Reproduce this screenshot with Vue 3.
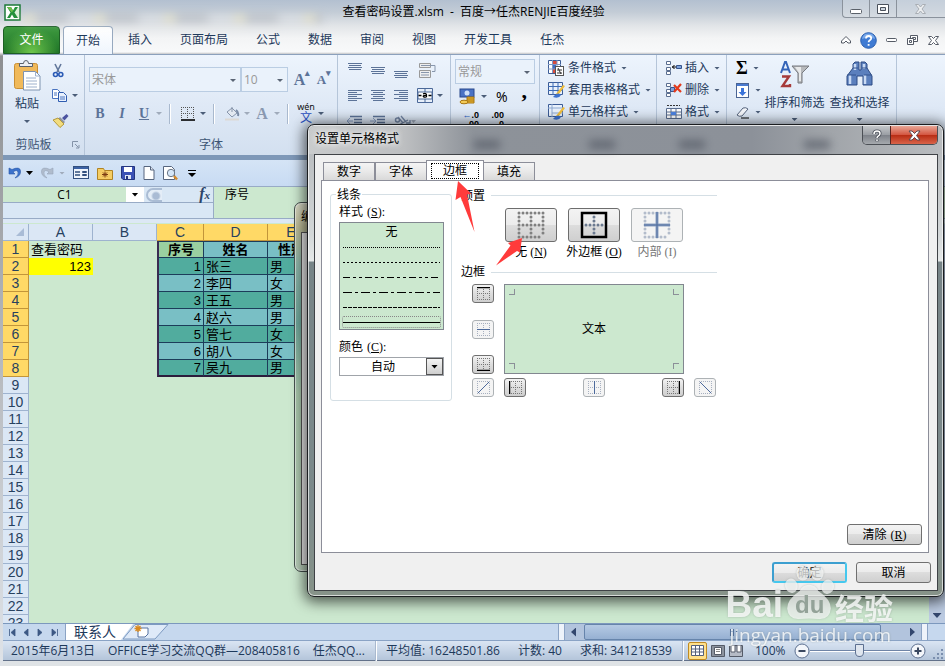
<script setup>
import { ref } from 'vue'

const tabs = ['插入', '页面布局', '公式', '数据', '审阅', '视图', '开发工具', '任杰']
const rows = [
  ['1', '张三', '男'],
  ['2', '李四', '女'],
  ['3', '王五', '男'],
  ['4', '赵六', '男'],
  ['5', '管七', '女'],
  ['6', '胡八', '女'],
  ['7', '吴九', '男'],
]
const emptyRows = Array.from({ length: 15 }, (_, i) => i + 9)
const aligns = [
  [0, 0], [0, 4], [0, 8],
]
const dashes = ['1 1', '2 2', '7 3 3 3 3 3', '9 3 3 3', '4 1', '']
const fontName = ref('宋体')
const fontSize = ref('10')
const numberFormat = ref('常规')
const lineColor = ref('自动')
const lineStyle = ref(5)
const zoom = ref(50)
const dialogTabs = ['数字', '字体', '边框', '填充']
const activeTab = ref(2)
</script>

<template>
  <div class="window">
    <header class="titlebar">
      <svg class="app-icon" width="17" height="17" viewBox="0 0 17 17">
        <rect x="1" y="1" width="15" height="15" fill="#fff" stroke="#1d7a3a" stroke-width="1.5" />
        <rect x="11" y="3" width="4" height="11" fill="#dcefd9" />
        <path d="M3 3h4l2 3.500 2-3.500h3l-3.500 5.500L14 14h-4l-2-3.500L6 14H3l3.500-5.500z" fill="#23903a" />
        <path d="M3 3h4l2 3.500-1 2z" fill="#6fbf4a" />
      </svg>
      <span class="smudge"></span>
      <h1>查看密码设置.xlsm&nbsp; -&nbsp; 百度→任杰RENJIE百度经验</h1>
      <div class="win-buttons">
        <button aria-label="最小化"><svg width="14" height="12"><rect x="1.500" y="6.500" width="11" height="4" rx="1" fill="#fff" stroke="#5a616a" /></svg></button>
        <button aria-label="还原"><svg width="14" height="12"><path d="M1.500 1.500h11v9h-11z M4.500 4.500h5v3h-5z" fill="#fff" fill-rule="evenodd" stroke="#4a515c" /></svg></button>
        <button class="wide" aria-label="关闭"><svg width="14" height="12"><path d="M1.500 1.500h3l2 2.500 2-2.500h3l-3.500 4.500 3.500 4.500h-3l-2-2.500-2 2.500h-3L5 6z" fill="#eceef0" stroke="#a9aeb4" /></svg></button>
      </div>
    </header>

    <nav class="tabs">
      <button class="file-tab">文件</button>
      <button class="tab current">开始</button>
      <button v-for="t in tabs" :key="t" class="tab">{{ t }}</button>
      <div class="tab-tools">
        <button aria-label="折叠功能区"><svg width="12" height="10"><path d="M1.500 6L6 1.500 10.500 6v2H8L6 6 4 8H1.500z" fill="#fff" stroke="#555b66" /></svg></button>
        <button aria-label="帮助"><svg width="17" height="17"><circle cx="8.500" cy="8.500" r="7.800" fill="#3f7bd3" stroke="#2b5faf" /><path d="M2 7a6.600 6.600 0 0 1 13 0q-6-3-13 0z" fill="#78a8ea" /><path d="M6 6.500q0-2.500 2.600-2.500t2.600 2.300q0 1.200-1.400 2-1.200.7-1.200 2M8.600 12v1.800" fill="none" stroke="#fff" stroke-width="1.800" /></svg></button>
        <button aria-label="最小化工作簿"><svg width="13" height="8"><rect x="1.500" y="2.500" width="10" height="3" rx="1" fill="#fff" stroke="#555b66" /></svg></button>
        <button aria-label="还原工作簿"><svg width="13" height="12"><path d="M4.500 1.500h7v6h-7z" fill="#fff" stroke="#555b66" /><path d="M6.500 3.500h3v2h-3z" fill="none" stroke="#555b66" /><path d="M1.500 4.500h6v6h-6z" fill="#fff" stroke="#555b66" /><path d="M3.500 6.500h2v2h-2z" fill="none" stroke="#555b66" /></svg></button>
        <button aria-label="关闭工作簿"><svg width="13" height="11"><path d="M1.500 1.500h3l2 2 2-2h3L8.500 5.500l3 4h-3l-2-2-2 2h-3l3-4z" fill="#fff" stroke="#555b66" /></svg></button>
      </div>
    </nav>

    <section class="ribbon">
      <div class="group clipboard">
        <div class="clip-body">
          <button class="paste">
            <svg width="28" height="31" viewBox="0 0 28 31">
              <rect x="1.500" y="3.500" width="23" height="25" rx="2" fill="#f0b95a" stroke="#c98f35" />
              <path d="M6.500 6.500V3.500h4q0-3 2.500-3t2.500 3h4v3z" fill="#eceff2" stroke="#59616c" />
              <path d="M10.500 11.500h12l4.500 4.500v14h-16.500z" fill="#fff" stroke="#7f93b0" />
              <path d="M22.500 11.500v4.500H27M13 18h10M13 21h11M13 24h11M13 27h11" stroke="#9db0cc" fill="none" />
            </svg>
            <span>粘贴</span>
            <i class="caret"></i>
          </button>
          <div class="clip-side">
            <button aria-label="剪切"><svg width="12" height="15"><path d="M3 1l4 8M9 1L5 9" stroke="#62779b" stroke-width="1.600" /><circle cx="3.500" cy="11.500" r="2" fill="none" stroke="#2a5ab5" stroke-width="1.600" /><circle cx="8.800" cy="11.500" r="2" fill="none" stroke="#2a5ab5" stroke-width="1.600" /></svg></button>
            <button aria-label="复制"><svg width="16" height="13"><path d="M.5.500h5l3 3v6h-8z" fill="#fff" stroke="#4a74c0" /><path d="M6.500 3.500h5l3 3v6h-8z" fill="#e9f1fd" stroke="#2f5cb0" /><path d="M2 4h3M2 6h3M8 8h5M8 10h5" stroke="#4a74c0" /></svg><i class="caret"></i></button>
            <button aria-label="格式刷"><svg width="17" height="15"><path d="M10 5l4.500-4 2 2-4 4.500z" fill="#4b53a0" /><path d="M8 4l5 5-2 2L6 6z" fill="#8d93a0" /><path d="M1 7l5-2 6 6-4 3.500z" fill="#f2dc7e" stroke="#b59a3a" /></svg></button>
          </div>
        </div>
        <p>剪贴板<svg class="launcher" width="8" height="8"><path d="M.5 6V.5H6M3 3l3.500 3.500M7 4v3H4" fill="none" stroke="#8493a8" /></svg></p>
      </div>

      <div class="group font">
        <div class="row top">
          <label class="combo name"><select v-model="fontName" aria-label="字体"><option>宋体</option></select></label>
          <label class="combo size"><select v-model="fontSize" aria-label="字号"><option>10</option></select></label>
          <button class="ico grow" aria-label="增大字号">A<sup>▴</sup></button>
          <button class="ico shrink" aria-label="减小字号">A<sup>▾</sup></button>
        </div>
        <div class="row">
          <button class="ico biu"><b>B</b></button>
          <button class="ico biu"><em>I</em></button>
          <button class="ico biu"><u>U</u></button>
          <i class="caret dim"></i><i class="sep"></i>
          <button class="ico" aria-label="边框"><svg width="14" height="14"><path d="M0 .5h13M0 6.500h13M.5 0v12M6.500 0v12M12.500 0v12" stroke="#555" stroke-dasharray="1 1" /><path d="M0 13h14" stroke="#000" stroke-width="1.600" /></svg></button>
          <i class="caret"></i><i class="sep"></i>
          <button class="ico" aria-label="填充颜色"><svg width="15" height="15"><path d="M2 6l5-4 5 5-5 4z" fill="#e3e9f1" stroke="#8795ab" /><path d="M7 6V1" stroke="#8795ab" /><path d="M11 4q3 2 2 6" stroke="#7a8ba5" fill="none" stroke-width="2" /><path d="M0 13.500h14" stroke="#dcd9d4" stroke-width="2" /></svg></button>
          <i class="caret dim"></i>
          <button class="ico pale"><b>A</b></button>
          <i class="caret dim"></i><i class="sep"></i>
          <button class="ico pinyin" aria-label="拼音指南"><small>wén</small><span>文</span></button>
          <i class="caret"></i>
        </div>
        <p>字体</p>
      </div>

      <div class="group align">
        <div class="icon-grid">
          <svg v-for="(a, i) in aligns" :key="'v' + i" width="14" height="17"><path :d="`M0 ${a[1] + 1.5}h14M1 ${a[1] + 3.5}h12M0 ${a[1] + 5.5}h14M1 ${a[1] + 7.5}h12`" stroke="#5c7398" /></svg>
          <svg width="18" height="16"><path d="M.5.500h11v4H.500zM.500 7.500h11v7H.500z" fill="#eee" stroke="#999" /><path d="M2 9.500h8M2 12h8M2 2.500h14v6l-3 0" stroke="#8896ac" fill="none" /></svg>
          <svg v-for="i in 3" :key="'h' + i" width="14" height="14"><path :d="['M0 1.500h14M0 5.500h14M0 9.500h14M0 3.500h9M0 7.500h9M0 11.500h9', 'M0 1.500h14M0 5.500h14M0 9.500h14M2 3.500h10M2 7.500h10M2 11.500h10', 'M0 1.500h14M0 5.500h14M0 9.500h14M5 3.500h9M5 7.500h9M5 11.500h9'][i - 1]" stroke="#5c7398" /></svg>
          <span class="merge"><svg width="16" height="15"><path d="M.5.500h15v14H.500zM8 0v15" fill="#e7effa" stroke="#4b6898" /><path d="M1 4h14v7H1z" fill="#fff" stroke="#4b6898" /><path d="M1.500 7.500h3M11.500 7.500h3" stroke="#000" stroke-width="1.500" /><path d="M6 5.800q3.500-1 3.500 1v2.500M9.500 7.500q-3.500-.3-3.300 1t3.300.2" fill="none" stroke="#000" stroke-width="1.200" /></svg><i class="caret"></i></span>
          <svg width="16" height="12"><path d="M3 1.500h12M7 4.500h8M7 7.500h8M3 10.500h12" stroke="#5c7398" stroke-width="1.500" /><path d="M6 6H0M3 3L0 6l3 3" stroke="#8aa0c4" fill="none" /></svg>
          <svg width="16" height="12"><path d="M3 1.500h12M7 4.500h8M7 7.500h8M3 10.500h12" stroke="#5c7398" stroke-width="1.500" /><path d="M0 6h6M3 3l3 3-3 3" stroke="#8aa0c4" fill="none" /></svg>
          <svg class="rotate" width="22" height="12"><circle cx="3.500" cy="5" r="2" fill="none" stroke="#7386a5" stroke-width="1.500" /><path d="M4 2l5 6M7 1l5 6M3 11L14 5M12 8h4V5" stroke="#7386a5" stroke-width="1.300" fill="none" /><path d="M17 5h5l-2.500 3z" fill="#a0abbb" /></svg>
          <span></span>
        </div>
      </div>

      <div class="group number">
        <label class="combo fmt"><select v-model="numberFormat" aria-label="数字格式"><option>常规</option></select></label>
        <div class="row">
          <svg width="17" height="17"><rect x="1" y="1" width="14" height="8" fill="#4a72c4" stroke="#28488c" /><circle cx="8" cy="5" r="2.500" fill="#cfe0f8" /><path d="M8 9h7v6H8z" fill="#efb935" stroke="#a87612" /><path d="M8 11h7M8 13h7" stroke="#a87612" /><ellipse cx="5" cy="14" rx="4" ry="1.800" fill="#f3cb58" stroke="#a87612" /></svg>
          <i class="caret"></i><span class="pct">%</span><span class="comma">,</span>
        </div>
        <div class="row decimals"><span><i class="blue">←</i>.0<br>.00</span><span>.00<br><i class="blue">→</i>.0</span></div>
      </div>

      <div class="group list styles">
        <button><svg width="17" height="17"><path d="M.5.500h12v13H.500z" fill="#fff" stroke="#3c5c96" /><path d="M5 1h4v4H5zM5 9h3v4H5z" fill="#d84b3c" /><path d="M5 5h3v4H5z" fill="#3d6cc4" /><path d="M0 4.500h13M0 9h13M4.500 0v13M9 0v13" stroke="#7e98c4" fill="none" /><rect x="7.500" y="6.500" width="8" height="9" fill="#fff" stroke="#555" /><path d="M9 10h5M9 13h5M10 8l3 6" stroke="#333" /></svg>条件格式<i class="caret"></i></button>
        <button><svg width="17" height="17"><path d="M.5.500h14v12H.500z" fill="#e9f1fc" stroke="#3c5c96" /><path d="M0 4.500h15M0 8.500h15M5 0v13M10 0v13" stroke="#3f6cb5" /><path d="M15 3l2 1-6 8-3 0z" fill="#f0bd3a" /><path d="M5 15q5-6 8-2-2 4-8 2z" fill="#3d72cf" /></svg>套用表格格式<i class="caret"></i></button>
        <button><svg width="17" height="17"><path d="M.5.500h14v12H.500z" fill="#e9f1fc" stroke="#3c5c96" /><path d="M4 0v13M0 4h15M4 9h11" stroke="#8da8d0" /><path d="M15 3l2 1-6 8-3 0z" fill="#f0bd3a" /><path d="M5 15q5-6 8-2-2 4-8 2z" fill="#3d72cf" /></svg>单元格样式<i class="caret"></i></button>
      </div>

      <div class="group list cells">
        <button><svg width="16" height="15"><path d="M.5.500h4v3h-4zM.500 6.500h4v3h-4zM.500 10.500h4v3h-4z" fill="#fff" stroke="#5a6e90" /><path d="M10.500 4.500h5v3h-5z" fill="#7fa3dc" stroke="#36548c" /><path d="M6 6h4M8.500 4l-2 2 2 2" stroke="#000" fill="none" /></svg>插入<i class="caret"></i></button>
        <button><svg width="16" height="15"><path d="M.5.500h4v3h-4zM.500 6.500h4v3h-4zM.500 10.500h4v3h-4z" fill="#fff" stroke="#5a6e90" /><path d="M4.500 4.500h4v4h-4z" fill="#7fa3dc" stroke="#36548c" /><path d="M8 2l7 7M15 1L8 9" stroke="#e33a1c" stroke-width="2.200" /></svg>删除<i class="caret"></i></button>
        <button><svg width="16" height="16"><path d="M1 1.500h13" stroke="#333" stroke-dasharray="2 1" /><path d="M.5 4.500h15v10H.500zM0 8h16M0 11h16M5 4v11M10 4v11" fill="#fff" stroke="#5a6e90" /><path d="M5 8h5v3H5z" fill="#4c82df" /></svg>格式<i class="caret"></i></button>
      </div>

      <div class="group editing">
        <div class="list narrow">
          <button aria-label="求和"><span class="sigma">Σ</span><i class="caret"></i></button>
          <button aria-label="填充"><svg width="14" height="15"><rect x=".5" y=".5" width="12" height="14" fill="#fff" stroke="#4a6494" /><path d="M1 2h11" stroke="#4a7ad0" stroke-width="2" /><path d="M5 5h3v4h2.500L6.500 13 2.500 9H5z" fill="#3b74da" /></svg><i class="caret"></i></button>
          <button aria-label="清除"><svg width="14" height="13"><path d="M1 9l6-7q3-1 5 1l-6 7q-3 1-5-1z" fill="#f4f6fa" stroke="#56657e" /><path d="M5 12h8" stroke="#000" /></svg><i class="caret"></i></button>
        </div>
        <button class="big">
          <svg width="32" height="28"><path d="M13 6h17l-7 7v10l-4 0V13z" fill="#b7b9bc" stroke="#76797f" /><path d="M16 7h6l0 14h-2V13z" fill="#e8e9ea" /><path d="M2 13L6 2h1l4 11M3.500 9.500h6" stroke="#3564b8" stroke-width="2" fill="none" /><path d="M3 16.500h7L3.500 26H11v-2" stroke="#a63a3a" stroke-width="2.400" fill="none" /></svg>
          <span>排序和筛选</span><i class="caret"></i>
        </button>
        <button class="big">
          <svg width="28" height="28"><path d="M9 2h4v8h2V2h4l2 2v4l5 8v9h-9v-9h-6v9H1v-9l6-8V4z" fill="#5b7fbd" stroke="#2d4b84" /><path d="M4 15v9M19 15v9M9 4v6M18 4v5" stroke="#c9daf4" stroke-width="2.500" /><path d="M7 8h5M16 8h5M1 15h9M18 15h8" stroke="#34548f" /></svg>
          <span>查找和选择</span><i class="caret"></i>
        </button>
      </div>
    </section>

    <div class="quick">
      <svg class="u" width="13" height="14"><path d="M1 2v6h6L5 6q4-3 5 0t-3 6q6-2 5.500-7T4 3.500z" fill="#3b72cc" stroke="#2855a5" stroke-width=".6" /></svg><i class="caret black"></i>
      <svg class="u" width="13" height="14"><path d="M12 2v6H6l2-2Q4 3 3 6t3 6Q0 10 .5 5T9 3.500z" fill="#b0bccd" stroke="#97a5b9" stroke-width=".6" /></svg><i class="caret dim"></i>
      <svg width="16" height="14"><rect x=".5" y=".5" width="15" height="12" fill="#eff4fb" stroke="#33507e" /><path d="M1 2h14" stroke="#3c62a4" stroke-width="2" /><path d="M2 6h5M2 9h5" stroke="#33507e" stroke-width="1.500" /><path d="M9.500 5.500h4v1h-4zM9.500 8.500h4v1h-4z" stroke="#33507e" fill="#fff" /></svg>
      <svg width="16" height="14"><path d="M.5 2.500h6l1 2h8v9H.500z" fill="#f5cd64" stroke="#b08324" /><path d="M8 5.500v6M5 8.500h6M6 6.500l4 4M10 6.500l-4 4" stroke="#7c3c12" /></svg>
      <svg width="14" height="14"><path d="M.5.500h13v13H2l-1.500-1.500z" fill="#3b51b5" stroke="#24357e" /><path d="M3 1h8v5H3z" fill="#fff" /><path d="M4 9h6v4H4z" fill="#dfe5f3" /><path d="M5 10h2v3H5z" fill="#24357e" /></svg>
      <svg width="12" height="14"><path d="M1 .5h6.500l3.500 3.500v9.500H1z" fill="#fff" stroke="#56657e" /><path d="M7.500.500v3.500H11" fill="#dfe6f0" stroke="#56657e" /></svg>
      <svg width="15" height="15"><path d="M.5.500h8l3 3v10H.500z" fill="#fff" stroke="#56657e" /><circle cx="8" cy="7" r="3.700" fill="#d5e6f8" stroke="#6b7686" /><path d="M11 10l3 3.500" stroke="#d38a2c" stroke-width="2.500" /></svg>
      <svg class="more" width="8" height="9"><path d="M0 1.500h8" stroke="#000" /><path d="M0 4h8L4 8z" /></svg>
    </div>

    <div class="formula">
      <div class="name-side">
        <div class="name-row">
          <input class="cell-name" value="C1" aria-label="名称框">
          <button class="drop" aria-label="名称列表"><i class="caret black"></i></button>
          <i class="knob"></i>
          <span class="fx">f<small>x</small></span>
        </div>
      </div>
      <input class="formula-text" value="序号" aria-label="编辑栏">
    </div>

    <div class="sheet">
      <table>
        <colgroup><col class="c0"><col class="ca"><col class="ca"><col class="cc"><col class="ca"><col class="cc"></colgroup>
        <thead>
          <tr>
            <th class="corner"><i></i></th><th>A</th><th>B</th><th class="on">C</th><th class="on">D</th><th class="on">E</th>
          </tr>
        </thead>
        <tbody>
          <tr>
            <th class="on">1</th><td>查看密码</td><td></td><td class="h first">序号</td><td class="h">姓名</td><td class="h">性别</td>
          </tr>
          <tr v-for="(r, i) in rows" :key="i" :class="['data', { odd: i % 2 === 0, last: i === 6 }]">
            <th class="on">{{ i + 2 }}</th><td :class="{ yellow: i === 0 }">{{ i === 0 ? '123' : '' }}</td><td></td>
            <td class="d num first">{{ r[0] }}</td><td class="d">{{ r[1] }}</td><td class="d">{{ r[2] }}</td>
          </tr>
          <tr v-for="n in emptyRows" :key="n"><th>{{ n }}</th><td></td><td></td><td></td><td></td><td></td></tr>
        </tbody>
      </table>
      <div class="vscroll"><i></i></div>
    </div>

    <div class="sheet-tabs">
      <div class="nav-arrows">
        <svg width="53" height="9"><path d="M1.500 1v7M7 1v7L3 4.500zM20 1v7l-4-3.500zM30 1v7l4-3.500zM44 1v7l4-3.500zM49.500 1v7" fill="#3c5884" stroke="#3c5884" stroke-width=".8" /></svg>
      </div>
      <button class="sheet-tab">联系人</button>
      <svg class="new-sheet" width="46" height="16"><path d="M0 15L12 .5h33L32 15z" fill="#dfeaf8" stroke="#7d9ac0" /><path d="M15 4h10v6l-3 3h-7z" fill="#fff" stroke="#5672a0" /><path d="M15 1v7M11.500 4.500h7M12.500 2l5 5M17.500 2l-5 5" stroke="#d98a1e" stroke-width="1.300" /></svg>
      <span class="fill"></span>
      <i class="split"></i>
      <div class="hscroll"><i class="al"></i><div class="thumb"><svg width="8" height="7"><path d="M1.500 0v7M4.500 0v7M7.500 0v7" stroke="#4e6c98" /></svg></div><i class="ar"></i></div>
      <i class="split"></i>
      <span class="end"></span>
    </div>

    <footer class="status">
      <span class="s-date">2015年6月13日</span>
      <span class="s-qq">OFFICE学习交流QQ群—208405816</span>
      <span class="s-user">任杰QQ...</span>
      <i class="sep"></i>
      <span>平均值: 16248501.86</span>
      <span>计数: 40</span>
      <span class="s-sum">求和: 341218539</span>
      <i class="sep last-sep"></i>
      <div class="views">
        <button class="sel" aria-label="普通"><svg width="13" height="11"><path d="M.5.500h12v10H.500zM0 4h13M0 7h13M4.500 0v11M8.500 0v11" fill="#fff" stroke="#54607a" /></svg></button>
        <button aria-label="页面布局"><svg width="14" height="12"><path d="M.5.500h13v11H.500z" fill="#8c939e" stroke="#545b68" /><path d="M3.500 2.500h7v7h-7z" fill="#fff" stroke="#545b68" /><path d="M5 4.500h4M5 6.500h4" stroke="#888" /></svg></button>
        <button aria-label="分页预览"><svg width="14" height="12"><path d="M.5.500h13v11H.500z" fill="#b5bbc6" stroke="#545b68" /><path d="M2 0h4v7H2zM8 0h4v7H8z" fill="#fff" stroke="#545b68" /></svg></button>
      </div>
      <span class="pctv">100%</span>
      <div class="zoomer">
        <button aria-label="缩小"><svg width="16" height="16"><circle cx="8" cy="8" r="7" fill="#f3f6fa" stroke="#5d7090" /><path d="M4.500 8h7" stroke="#3a4860" stroke-width="2" /></svg></button>
        <input type="range" v-model="zoom" aria-label="显示比例">
        <button aria-label="放大"><svg width="16" height="16"><circle cx="8" cy="8" r="7" fill="#f3f6fa" stroke="#5d7090" /><path d="M4.500 8h7M8 4.500v7" stroke="#3a4860" stroke-width="2" /></svg></button>
      </div>
      <svg class="grip" width="12" height="12"><path d="M8 1h3M4 5h3M8 5h3M0 9h3M4 9h3M8 9h3" stroke="#7b8fae" stroke-width="2" stroke-dasharray="2 2" /></svg>
    </footer>
    <div class="glass-edge"></div>

    <div class="back-dialog"><span>编</span><div></div></div>

    <section class="dialog" role="dialog" aria-label="设置单元格格式">
      <div class="d-title">
        <h2>设置单元格格式</h2>
        <i class="ghost g1"></i><i class="ghost g2"></i><i class="ghost g3"></i><i class="ghost g4"></i>
        <div class="d-buttons">
          <button class="help" aria-label="帮助"><svg width="10" height="13"><path d="M2 5q0-3 3-3t3 2.500q0 1.500-1.500 2.300T5 9M5 10.500v1.800" fill="none" stroke="#4b505a" stroke-width="3.200" /><path d="M2 5q0-3 3-3t3 2.500q0 1.500-1.500 2.300T5 9M5 10.500v1.500" fill="none" stroke="#fff" stroke-width="1.500" /></svg></button>
          <button class="close" aria-label="关闭"><svg width="13" height="11"><path d="M1 1h3l2.500 2.500L9 1h3L8.500 5.500 12 10H9L6.500 7.500 4 10H1l3.500-4.500z" fill="#fff" stroke="#5b4a52" /></svg></button>
        </div>
      </div>
      <div class="d-body">
        <div class="d-tabs" role="tablist">
          <button v-for="(t, i) in dialogTabs" :key="t" role="tab" :class="{ active: i === activeTab }" @click="activeTab = i"><span>{{ t }}</span></button>
        </div>
        <div class="panel">
          <fieldset class="lines">
            <legend>线条</legend>
            <span class="lbl">样式<kbd>(<u>S</u>):</kbd></span>
            <div class="style-list" role="listbox">
              <button role="option">无</button>
              <button v-for="(d, i) in dashes" :key="i" role="option" :class="{ chosen: i === lineStyle }" :aria-label="'线型 ' + (i + 1)" @click="lineStyle = i">
                <svg width="97" height="3"><path d="M0 1.500h97" stroke="#000" :stroke-dasharray="d" /></svg>
              </button>
            </div>
            <label class="lbl" for="line-color">颜色<kbd>(<u>C</u>):</kbd></label>
            <div class="color"><select id="line-color" v-model="lineColor"><option>自动</option></select><i><b class="caret black"></b></i></div>
          </fieldset>

          <div class="right">
            <div class="head"><span>预置</span><i></i></div>
            <div class="presets">
              <div>
                <button id="p-none" aria-labelledby="l-none"><svg width="28" height="28"><path class="dots" d="M2 2h24M2 14h24M2 26h24M2 2v24M14 2v24M26 2v24" stroke="#808080" /></svg></button>
                <label id="l-none" for="p-none">无<kbd>(<u>N</u>)</kbd></label>
              </div>
              <div>
                <button id="p-out" aria-labelledby="l-out"><svg width="28" height="28"><path class="dots" d="M6 14h18M14 6v18" stroke="#6b7a90" /><rect x="2" y="2" width="24" height="24" fill="none" stroke="#000" stroke-width="2.500" /></svg></button>
                <label id="l-out" for="p-out">外边框<kbd>(<u>O</u>)</kbd></label>
              </div>
              <div class="off">
                <button id="p-in" aria-labelledby="l-in"><svg width="28" height="28"><path class="dots" d="M2 2h24M2 26h24M2 2v24M26 2v24" stroke="#b3bccb" /><path d="M1 14h26M14 1v26" stroke="#8fa3c4" stroke-width="3" /><path d="M1 14h26M14 1v26" stroke="#4d6a9c" /></svg></button>
                <label id="l-in" for="p-in">内部<kbd>(I)</kbd></label>
              </div>
            </div>
            <div class="head second"><span>边框</span><i></i></div>
            <div class="border-grid">
              <div class="vert">
                <button aria-label="上边框"><svg width="13" height="13"><path d="M0 6.500h13M0 12.500h13M.5 0v13M6.500 0v13M12.500 0v13" stroke="#777" stroke-dasharray="1 1" /><path d="M0 .5h13" stroke="#000" stroke-width="1.500" /></svg></button>
                <button class="off" aria-label="内部横线"><svg width="13" height="13"><path d="M0 .5h13M0 12.500h13M.5 0v13M6.500 0v13M12.500 0v13" stroke="#a7b0c0" stroke-dasharray="1 1" /><path d="M0 6.500h13" stroke="#4d6a9c" /></svg></button>
                <button aria-label="下边框"><svg width="13" height="13"><path d="M0 .5h13M0 6.500h13M.5 0v13M6.500 0v13M12.500 0v13" stroke="#777" stroke-dasharray="1 1" /><path d="M0 12.500h13" stroke="#000" stroke-width="1.500" /></svg></button>
              </div>
              <div class="preview"><i class="tl"></i><i class="tr"></i><i class="bl"></i><i class="br"></i>文本</div>
              <button class="off" aria-label="斜线"><svg width="13" height="13"><path d="M0 .5h13M0 12.500h13M.5 0v13M12.500 0v13" stroke="#a7b0c0" stroke-dasharray="1 1" /><path d="M1 12L12 1" stroke="#4d6a9c" /></svg></button>
              <div class="horiz">
                <button aria-label="左边框"><svg width="13" height="13"><path d="M0 .5h13M0 6.500h13M0 12.500h13M6.500 0v13M12.500 0v13" stroke="#777" stroke-dasharray="1 1" /><path d="M.5 0v13" stroke="#000" stroke-width="1.500" /></svg></button>
                <button class="off" aria-label="内部竖线"><svg width="13" height="13"><path d="M0 .5h13M0 6.500h13M0 12.500h13M.5 0v13M12.500 0v13" stroke="#a7b0c0" stroke-dasharray="1 1" /><path d="M6.500 0v13" stroke="#4d6a9c" /></svg></button>
                <button aria-label="右边框"><svg width="13" height="13"><path d="M0 .5h13M0 6.500h13M0 12.500h13M.5 0v13M6.500 0v13" stroke="#777" stroke-dasharray="1 1" /><path d="M12.500 0v13" stroke="#000" stroke-width="1.500" /></svg></button>
              </div>
              <button class="off" aria-label="反斜线"><svg width="13" height="13"><path d="M0 .5h13M0 12.500h13M.5 0v13M12.500 0v13" stroke="#a7b0c0" stroke-dasharray="1 1" /><path d="M1 1l11 11" stroke="#4d6a9c" /></svg></button>
            </div>
          </div>
          <button class="push clear">清除<kbd>(<u>R</u>)</kbd></button>
        </div>
        <div class="d-foot">
          <button class="push ok">确定</button>
          <button class="push">取消</button>
        </div>
      </div>
      <svg class="arrows" width="100" height="100" viewBox="0 0 100 100">
        <path d="M12 1L9.500 20 14.500 17 28.500 52 21 14.500 25.500 14z" fill="#ff3b3b" />
        <path d="M76 58L62 63l2.500 2.500L50 85.500 71 71l3 1.500z" fill="#ff3b3b" />
      </svg>
    </section>

    <div class="watermark">
      <div class="wm-top">
        <strong>Bai</strong>
        <span class="paw">
          <svg width="50" height="54" viewBox="0 0 48 52"><ellipse cx="18" cy="7" rx="6" ry="7" /><ellipse cx="32" cy="7" rx="6" ry="7" /><ellipse cx="7" cy="19" rx="6" ry="7" transform="rotate(-15 7 19)" /><ellipse cx="42" cy="20" rx="6" ry="7" transform="rotate(15 42 20)" /><path d="M24 18q6 0 9 6 12 8 12 17-1 11-12 10-9-1-18 0-11 1-12-10 0-9 12-17 3-6 9-6z" /></svg>
          <b>du</b>
        </span>
        <strong class="cn">经验</strong>
      </div>
      <span class="url">jingyan.baidu.com</span>
    </div>
  </div>
</template>

<style>
body { background: #dfe3e8; }
</style>

<style scoped>
* { box-sizing: border-box; }
button, input, select { font: inherit; color: inherit; margin: 0; padding: 0; border: 0; background: none; appearance: none; }
button { display: flex; align-items: center; justify-content: center; }
svg { display: block; flex: none; }
p, h1, h2 { margin: 0; font: inherit; }
i, em { font-style: normal; }
.window { position: relative; overflow: hidden; min-height: 100vh; display: flex; flex-direction: column; padding-left: 3px; font: 12px/16px "Open Sans", "Noto Sans CJK SC", sans-serif; color: #1e395b; background: linear-gradient(#b3c0d0 0, #c3ccd6 12px, #e2e5e8 26px, #f3f4f5 38px, #f8f9fa 52px, #8d8f92 56px, #dfe3e8 100%); }
.caret { flex: none; width: 6px; height: 3px; background: #4b5d78; clip-path: polygon(0 0, 100% 0, 50% 100%); }
.caret.dim { background: #a0abbb; }
.caret.black { width: 7px; height: 4px; background: #000; }

.titlebar { height: 26px; display: flex; align-items: flex-start; position: relative; }
.app-icon { margin: 4px 0 0 1px; }
.smudge { position: absolute; left: 20px; top: 14px; width: 300px; height: 9px; background: repeating-linear-gradient(90deg, #e6e1c4 0 10px, #b4b8be 16px 40px, #dcdfe3 50px 70px); filter: blur(4px); opacity: .6; }
.titlebar h1 { flex: 1; text-align: center; color: #000; padding: 4px 0 0 84px; white-space: nowrap; position: relative; }
.win-buttons { display: flex; border: 1px solid #8a929c; border-top: 0; border-right: 0; border-radius: 0 0 0 4px; height: 18px; background: #e2e6ea66; }
.win-buttons button { width: 27px; border-right: 1px solid #8a929c; }
.win-buttons .wide { width: 48px; border: 0; }

.tabs { height: 28px; display: flex; color: #1e395b; }
.file-tab { width: 57px; margin-right: 3px; border: 1px solid #1c5f24; border-radius: 4px 4px 0 0; color: #fff; background: radial-gradient(ellipse at 50% 100%, #6fc84c, transparent 70%), linear-gradient(#3e9a3f, #1f7427); }
.tab { padding: 0 14px; }
.tab.current { padding: 0 12px; margin-right: 1px; border: 1px solid #97a9bf; border-bottom: 0; border-radius: 4px 4px 0 0; background: linear-gradient(#fff, #eff5fd); }
.tab-tools { margin-left: auto; display: flex; align-items: center; gap: 8px; padding-right: 5px; }
.ribbon { position: relative; height: 101px; display: flex; border-top: 1px solid #8ba0bc; background: linear-gradient(#edf4fd, #dfe9f6 50%, #d3e0f0); }
.group { position: relative; border-right: 1px solid #b5c5d9; display: flex; flex-direction: column; flex: none; }
.group p { position: absolute; left: 0; right: 0; bottom: 2px; text-align: center; color: #3d5574; }
.clipboard { width: 82px; }
.clipboard p { padding-right: 20px; }
.launcher { position: absolute; right: 4px; top: 4px; }
.clip-body { display: flex; padding: 3px 0 0 8px; gap: 8px; }
.paste { flex-direction: column; width: 32px; justify-content: flex-start; padding-top: 2px; }
.paste span { margin: 5px 0 8px; }
.clip-side { display: flex; flex-direction: column; padding-top: 0; }
.clip-side button { height: 25px; justify-content: flex-start; gap: 4px; padding-left: 1px; }
.font { width: 253px; padding: 12px 0 0 4px; }
.row { display: flex; align-items: center; height: 25px; }
.font .row.top { margin-bottom: 9px; }
.combo { position: relative; display: block; height: 25px; border: 1px solid #bacde3; background: #eaf2fb; color: #999; }
.combo::after { content: ""; position: absolute; right: 4px; top: 11px; width: 6px; height: 3px; background: #5a6575; clip-path: polygon(0 0, 100% 0, 50% 100%); }
.combo select { display: block; width: 100%; height: 23px; padding-left: 2px; }
.combo.name { width: 152px; }
.combo.size { width: 47px; }
.fmt { width: 80px; }
.ico { width: 22px; height: 22px; font-family: "Liberation Serif", serif; font-size: 16px; color: #5c7398; }
.biu { font-size: 14px; font-weight: bold; }
.ico em { font-style: italic; }
.ico sup { font-size: 9px; align-self: flex-start; line-height: 8px; }
.grow, .shrink { font-weight: bold; }
.grow { margin-left: 3px; }
.shrink { font-size: 13px; }
.pale { color: #8998b0; }
.font .row .caret { margin: 0 1px; }
.sep { flex: none; width: 2px; height: 20px; background: linear-gradient(90deg, #a9b9ce 50%, #fff 50%); margin: 0 6px; }
.pinyin { flex-direction: column; font-family: "Noto Sans", "Noto Sans CJK SC", sans-serif; }
.pinyin small { font-size: 9px; line-height: 8px; color: #111; }
.pinyin span { font-size: 12px; line-height: 13px; color: #2a4fc0; }
.align { width: 113px; padding: 3px 0 0 5px; }
.icon-grid { display: grid; grid-template-columns: 23px 23px 23px 32px; grid-auto-rows: 25px; align-items: center; justify-items: center; }
.rotate { justify-self: start; margin-left: 5px; }
.merge { display: flex; align-items: center; gap: 4px; padding-left: 4px; }
.number { width: 89px; padding: 4px 0 0 4px; }
.number .row { gap: 5px; padding-left: 4px; }
.pct { font-size: 14px; margin-left: 4px; color: #000; }
.comma { font: bold 22px/10px "Liberation Serif", serif; margin: 0 0 12px 9px; color: #000; }
.decimals { font: bold 9px/9px "Liberation Sans", sans-serif; color: #000; height: 22px; }
.decimals span { width: 20px; text-align: right; }
.blue { color: #2a62c8; }
.list { padding-top: 2px; color: #1e395b; }
.list button { height: 22px; justify-content: flex-start; gap: 3px; white-space: nowrap; }
.list button .caret { margin-left: 2px; }
.styles { width: 117px; padding-left: 8px; }
.cells { width: 70px; padding-left: 9px; }
.editing { flex-direction: row; width: 170px; }
.narrow { width: 35px; padding-left: 9px; flex: none; }
.sigma { font: bold 18px/18px "Liberation Serif", serif; color: #000; width: 12px; }
.big { flex-direction: column; justify-content: flex-start; width: 65px; padding-top: 5px; white-space: nowrap; height: 75px; }
.big svg { height: 28px; }
.big span { margin: 7px 0 7px; }

.quick { height: 31px; border-top: 5px solid #7e98b8; background: linear-gradient(#d5e4f6, #c8dbf3); display: flex; align-items: center; gap: 8px; padding-left: 5px; flex: none; }
.quick .u { margin-right: -3px; }
.more { margin-left: 2px; }
.formula { display: flex; height: 33px; border: 1px solid #98abc6; border-width: 1px 0; flex: none; background: #d9e7f5; }
.name-side { width: 211px; border-right: 1px solid #98abc6; }
.name-row { display: flex; height: 16px; border-bottom: 1px solid #98abc6; align-items: center; }
.cell-name { width: 123px; height: 15px; text-align: center; background: #cce8cf; color: #000; }
.drop { width: 18px; height: 15px; background: #fff; }
.knob { width: 16px; height: 14px; margin-left: 2px; border: 2px solid #aabcd4; border-right: 0; border-radius: 8px 0 0 8px; background: radial-gradient(circle at 8px 6px, #a9bbd4 3px, #e4edf7 5px); }
.fx { margin: 0 3px 0 auto; font: italic bold 16px/14px "Liberation Serif", serif; color: #2c4468; }
.fx small { font-size: 11px; }
.formula-text { flex: 1; min-width: 0; background: #cce8cf; color: #000; padding: 0 0 16px 11px; }
.sheet { min-height: 0; overflow: hidden; display: flex; justify-content: space-between; background: linear-gradient(#dce8f5 0 4px, transparent 4px), #cce8cf; padding-top: 5px; flex: 1 1 0; }
table { border-collapse: separate; border-spacing: 0; table-layout: fixed; width: 312px; align-self: flex-start; font: 13px/16px "Liberation Sans", "Noto Sans CJK SC", sans-serif; color: #000; }
.c0 { width: 26px; } .ca { width: 64px; } .cc { width: 47px; }
th, td { height: 17px; padding: 0 2px; overflow: hidden; white-space: nowrap; line-height: 15px; }
th { font-weight: normal; font-size: 14px; background: #dbe7f5; border: 1px solid #9eb3cf; border-width: 0 1px 1px 0; color: #27415f; padding: 0; }
th.on { background: #ffd966; border-color: #c2953a; }
thead th { height: 17px; }
.corner i { display: block; width: 8px; height: 8px; margin-left: 13px; background: #a9bcd6; clip-path: polygon(100% 0, 100% 100%, 0 100%); }
.yellow { background: #ff0; text-align: right; }
.h { text-align: center; font-weight: bold; background: #79bfc5; border: 1px solid #1c3c5a; border-width: 1px 1px 1px 0; }
.h.first { background: #9ad0a0; }
.d { background: #79bfc5; border: 1px solid #1c3c5a; border-width: 0 1px 1px 0; }
.odd .d { background: #51ac9e; }
.num { text-align: right; }
.first { border-left: 2px solid #3a2a52; }
.last .d { border-bottom: 2px solid #2c1c3c; }
.vscroll { width: 16px; background: #bccbe2; display: flex; align-items: flex-end; justify-content: center; padding-bottom: 5px; }
.vscroll i { width: 9px; height: 5px; background: #33476e; clip-path: polygon(0 0, 100% 0, 50% 100%); }

.sheet-tabs { height: 17px; flex: none; display: flex; background: #c6d8ee; border-top: 1px solid #7c98bd; }
.nav-arrows { width: 63px; display: flex; align-items: center; padding-left: 5px; border-right: 1px solid #8ba3c4; }
.sheet-tab { background: #fff; width: 67px; font-size: 14px; clip-path: polygon(0 0, 100% 0, 82% 100%, 0 100%); justify-content: flex-start; padding-left: 8px; }
.new-sheet { margin-left: -10px; }
.fill { flex: 1; }
.split { width: 7px; border: 2px solid #8ba3c4; border-width: 0 1px; background: #eef3fa; }
.hscroll { width: 356px; display: flex; align-items: center; background: #b2c4dd; gap: 8px; padding: 0 6px; }
.al, .ar { width: 5px; height: 9px; background: #33476e; clip-path: polygon(100% 0, 100% 100%, 0 50%); }
.ar { clip-path: polygon(0 0, 100% 50%, 0 100%); margin-left: auto; }
.thumb { width: 297px; height: 16px; border: 1px solid #6684ab; border-radius: 2px; background: linear-gradient(#b5cae4, #96b0d2); display: flex; align-items: center; justify-content: center; }
.end { width: 17px; }
.status { height: 21px; flex: none; display: flex; align-items: center; padding-left: 8px; white-space: nowrap; border-top: 1px solid #8aa3c5; border-bottom: 1px solid #62718a; background: linear-gradient(#dae5f3, #b4c5da); }
.status > span { margin-right: 18px; }
.status .s-date { margin-right: 13px; }
.status .s-qq { margin-right: 13px; }
.status .s-user { margin-right: 10px; }
.status .s-sum { margin-right: 10px; }
.status .sep { margin: 0 9px 0 0; }
.status .last-sep { margin-right: 4px; }
.views { display: flex; gap: 4px; align-items: center; }
.views .sel { width: 19px; height: 18px; border: 1px solid #c08a22; border-radius: 2px; background: #ffe08a; }
.status .pctv { margin: 0 8px 0 12px; }
.zoomer { display: flex; align-items: center; flex: 1; min-width: 0; }
.zoomer input { flex: 1; width: 0; min-width: 0; height: 16px; background: linear-gradient(transparent 7px, #6f84a6 7px 8px, #fff 8px 9px, transparent 9px); }
.zoomer input::-webkit-slider-thumb { appearance: none; width: 9px; height: 13px; background: #dfe6ef; border: 1px solid #5d7090; border-radius: 1px 1px 5px 5px; }
.grip { margin: 8px 0 0 7px; }
.glass-edge { height: 5px; flex: none; background: #dfe3e6; }

.back-dialog { position: absolute; left: 294px; top: 202px; width: 40px; height: 370px; border: 1px solid #45504e; border-radius: 7px; padding: 5px 6px 6px 6px; background: linear-gradient(#dadcc9 0, #c2c09a 24px, #8fb6aa 60px, #6da69a 120px, #a8c7ab 190px, #b9cfba 100%); color: #000; box-shadow: inset 0 0 0 1px #ffffff88; }
.back-dialog span { display: block; height: 24px; line-height: 18px; }
.back-dialog div { height: 333px; border: 1px solid #555; background: #efefef; }

.dialog { position: absolute; left: 307px; right: 1px; top: 124px; border: 1px solid #1b1d20; border-radius: 7px; padding: 0 5px 5px 6px; color: #000; background: linear-gradient(#b2b5b8 0, #d3d7d8 110px, #e5e8e8 136px, #778487 137px, #7c8a8b 380px, #879389 100%); box-shadow: inset 0 0 0 1px #ffffffaa, 0 2px 14px 3px #000000a0; }
.d-title { height: 28px; margin: 1px -4px 0 -5px; padding: 0 13px 0 6px; position: relative; display: flex; justify-content: space-between; border-radius: 6px 6px 0 0; background: linear-gradient(90deg, #c9cbcc, #bdbfc1 15%, #8d9299 26%, #8c9199 70%, #a0a4a9 82%, #b9bcbf); }
.d-title h2 { line-height: 26px; text-shadow: 0 0 6px #fff, 0 0 6px #fff; }
.ghost { position: absolute; top: 14px; width: 26px; height: 9px; background: #555b66; filter: blur(4px); opacity: .7; }
.g1 { left: 165px; } .g2 { left: 280px; } .g3 { left: 370px; } .g4 { left: 495px; }
.d-buttons { display: flex; height: 19px; border: 1px solid #4b4f55; border-top: 0; border-radius: 0 0 5px 5px; overflow: hidden; position: absolute; right: 4px; top: 0; }
.help { width: 27px; background: linear-gradient(#c4c7ca, #999da3 50%, #7d8188 50%, #a5a9ae); }
.close { width: 47px; border-left: 1px solid #5a2520; background: linear-gradient(#e9a695, #d3543f 50%, #b72b12 50%, #d9644a); }
.d-body { border: 1px solid #3f4246; background: #f0f0f0; padding: 7px 8px 7px 6px; }
.d-tabs { display: flex; align-items: flex-end; height: 18px; padding-left: 2px; }
.d-tabs button { width: 52px; height: 18px; border: 1px solid #8c8e99; border-bottom: 0; background: linear-gradient(#f4f4f4, #e9e9e9 50%, #d9d9d9); }
.d-tabs .active { width: 58px; height: 21px; background: #fff; margin: 0 -1px -1px; position: relative; }
.d-tabs .active span { border: 1px dotted #000; padding: 0 11px; line-height: 14px; }
.panel { position: relative; display: flex; min-height: 373px; border: 1px solid #8c8e99; background: #fff; padding: 7px 6px 7px 8px; gap: 9px; }
kbd { font: 12px/14px "Liberation Serif", serif; margin-left: 4px; }
kbd u { text-underline-offset: 1px; }
.lines { width: 122px; height: 213px; margin: 0; border: 1px solid #d5dfe5; border-radius: 3px; padding: 0 7px 0 8px; display: block; flex: none; min-width: 0; }
.lines legend { padding: 0 1px; margin-left: -3px; line-height: 13px; }
.lbl { display: block; line-height: 18px; height: 19px; margin-top: 2px; }
.style-list { height: 108px; margin-bottom: 8px; border: 1px solid #828790; background: #cce8cf; padding: 1px 2px; }
.style-list button { width: 100%; height: 15px; }
.style-list button:first-child { height: 16px; }
.style-list .chosen { height: 12px; border: 1px dotted #888; margin-top: 1px; border-radius: 2px; }
.color { display: flex; height: 19px; border: 1px solid #a0a4aa; }
.color select { flex: 1; text-align: center; text-align-last: center; min-width: 0; }
.color i { width: 17px; border: 1px solid #555; background: linear-gradient(#f3f3f3, #cfcfcf); display: flex; align-items: center; justify-content: center; }
.right { width: 256px; flex: none; padding-top: 1px; }
.head { display: flex; align-items: center; gap: 6px; height: 13px; }
.head i { flex: 1; height: 1px; background: #d5dfe5; }
.second { margin-top: 4px; height: 16px; }
.presets { display: flex; gap: 11px; padding: 6px 0 0 44px; }
.presets > div { width: 52px; display: flex; flex-direction: column; align-items: center; white-space: nowrap; }
.presets button { width: 52px; height: 34px; border: 1px solid #6d6d6d; border-radius: 3px; background: linear-gradient(#f3f3f3, #ebebeb 50%, #dddddd 50%, #cfcfcf); }
.dots { fill: none; stroke-width: 3px; stroke-linecap: round; stroke-dasharray: 0 4; }
.presets label { margin-top: 2px; }
.presets kbd { margin-left: 3px; }
.off { color: #777; }
.presets .off button, .border-grid button.off { border-color: #adb2b5; background: #f4f4f4; }
.border-grid { display: grid; grid-template-columns: 22px 180px 22px; grid-template-rows: 90px 20px; gap: 4px 10px; padding: 4px 0 0 11px; }
.border-grid button { width: 22px; height: 19px; border: 1px solid #707070; border-radius: 3px; background: linear-gradient(#f3f3f3, #dddddd 50%, #cfcfcf); }
.vert { display: flex; flex-direction: column; justify-content: space-between; }
.horiz { display: flex; justify-content: space-between; }
.preview { position: relative; grid-column: 2 / 4; width: 180px; border: 1px solid #828790; background: #cce8cf; display: flex; align-items: center; justify-content: center; }
.preview i { position: absolute; width: 6px; height: 6px; border: 0 solid #8b8f98; }
.preview .tl { left: 4px; top: 4px; border-width: 0 1px 1px 0; }
.preview .tr { right: 4px; top: 4px; border-width: 0 0 1px 1px; }
.preview .bl { left: 4px; bottom: 4px; border-width: 1px 1px 0 0; }
.preview .br { right: 4px; bottom: 4px; border-width: 1px 0 0 1px; }
.push { width: 75px; height: 21px; border: 1px solid #707070; border-radius: 3px; background: linear-gradient(#f3f3f3, #ebebeb 50%, #dddddd 50%, #cfcfcf); }
.clear { margin: auto 0 0 auto; }
.ok { border: 2px solid; border-color: #3c9fd0 #45c8ee #45c8ee #3c9fd0; color: #000; }
.d-foot { display: flex; justify-content: flex-end; gap: 9px; padding-top: 9px; margin-right: -2px; }
.arrows { position: absolute; left: 138px; top: 55px; pointer-events: none; }

.watermark { position: absolute; right: 46px; bottom: 20px; color: #ffffffc8; fill: #ffffffa8; filter: drop-shadow(0 0 1px #7d8a8499); pointer-events: none; }
.wm-top { display: flex; align-items: flex-end; justify-content: flex-end; height: 66px; padding-right: 6px; }
.wm-top strong { font: bold 37px/38px "Liberation Sans", sans-serif; }
.wm-top .cn { font: bold 29px/34px "Noto Sans CJK SC", sans-serif; }
.paw { position: relative; width: 52px; height: 66px; display: flex; align-items: flex-end; justify-content: center; padding-bottom: 4px; }
.paw b { position: absolute; bottom: 8px; left: 12px; font: bold 24px/22px "Liberation Sans", sans-serif; color: #93a298; }
.url { display: block; font: 19px/22px "Open Sans", sans-serif; padding-left: 4px; }
</style>
